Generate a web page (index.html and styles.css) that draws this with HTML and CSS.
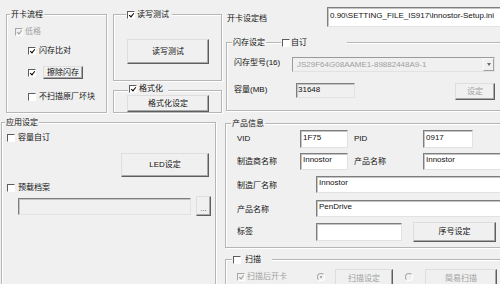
FILE: index.html
```html
<!DOCTYPE html>
<html>
<head>
<meta charset="utf-8">
<link rel="stylesheet" href="styles.css">
</head>
<body>
<div class="win">
  <div class="left">
    <div class="toprow">
      <div class="group g-flow">
        <div class="gtitle t-flow"><span class="tt">开卡流程</span></div>
        <div class="cbrow r-low dis"><span class="cb chk off"></span><span>低格</span></div>
        <div class="cbrow r-cmp"><span class="cb chk"></span><span>闪存比对</span></div>
        <div class="cbrow r-erase"><span class="cb chk"></span><button class="btn b-erase">擦除闪存</button></div>
        <div class="cbrow r-noscan"><span class="cb"></span><span>不扫描原厂坏块</span></div>
      </div>
      <div class="stack">
        <div class="group g-rw">
          <div class="gtitle t-rw"><span class="tt"><span class="cb chk"></span>读写测试</span></div>
          <button class="btn b-rw">读写测试</button>
        </div>
        <div class="group g-fmt">
          <div class="gtitle t-fmt"><span class="tt"><span class="cb chk"></span>格式化</span></div>
          <button class="btn b-fmt">格式化设定</button>
        </div>
      </div>
    </div>
    <div class="group g-app">
      <div class="gtitle t-app"><span class="tt">应用设定</span></div>
      <div class="cbrow r-cap"><span class="cb"></span><span>容量自订</span></div>
      <button class="btn b-led">LED设定</button>
      <div class="cbrow r-pre"><span class="cb"></span><span>预载档案</span></div>
      <div class="r-path"><div class="edit e-path off"></div><button class="btn b-dots">...</button></div>
    </div>
  </div>

  <div class="right">
    <div class="filerow">
      <span class="filelbl">开卡设定档</span>
      <div class="edit e-file">0.90\SETTING_FILE_IS917\Innostor-Setup.ini</div>
    </div>

    <div class="group g-nand">
      <div class="gtitle t-nand">
        <span class="tt">闪存设定</span>
        <span class="tt tt2"><span class="cb"></span>自订</span>
      </div>
      <div class="nrow n1">
        <span class="nl nl1">闪存型号(16)</span>
        <div class="combo"><span class="ctext">JS29F64G08AAME1-89882448A9-1</span><span class="dd"></span></div>
      </div>
      <div class="nrow n2">
        <span class="nl nl2">容量(MB)</span>
        <div class="edit e-cap off">31648</div>
        <button class="btn b-set dis">设定</button>
      </div>
    </div>

    <div class="group g-prod">
      <div class="gtitle t-prod"><span class="tt">产品信息</span></div>
      <div class="prow p1">
        <span class="pl pl-a">VID</span>
        <div class="edit e-s">1F75</div>
        <span class="pl pl-b">PID</span>
        <div class="edit e-s2">0917</div>
      </div>
      <div class="prow p2">
        <span class="pl pl-a">制造商名称</span>
        <div class="edit e-s">Innostor</div>
        <span class="pl pl-b">产品名称</span>
        <div class="edit e-m">Innostor</div>
      </div>
      <div class="prow p3">
        <span class="pl pl-c">制造厂名称</span>
        <div class="edit e-l">Innostor</div>
      </div>
      <div class="prow p4">
        <span class="pl pl-c">产品名称</span>
        <div class="edit e-l">PenDrive</div>
      </div>
      <div class="prow p5">
        <span class="pl pl-c">标签</span>
        <div class="edit e-tag"></div>
        <button class="btn b-sn">序号设定</button>
      </div>
    </div>

    <div class="group g-scan">
      <div class="gtitle t-scan"><span class="tt"><span class="cb"></span>扫描</span></div>
      <div class="srow dis">
        <span class="cb chk off"></span>
        <span class="s-txt">扫描后开卡</span>
        <span class="rd on r1"></span>
        <button class="btn dis b-scan">扫描设定</button>
        <span class="rd r2"></span>
        <button class="btn dis b-easy">简易扫描</button>
      </div>
    </div>
  </div>
</div>
</body>
</html>
```

FILE: styles.css
```css
body {
  margin: 0;
}

.win {
  width: 500px;
  height: 284px;
  overflow: hidden;
  display: flex;
  background: #f0f0f0;
  color: #111;
  font-family: "Liberation Sans", "Noto Sans CJK SC", sans-serif;
  font-size: 8px;
  line-height: 10px;
}

/* ---------- generic controls ---------- */
.group {
  box-sizing: border-box;
  border: 1px solid #b6b6b6;
  box-shadow: inset 1px 1px 0 #fff, 1px 1px 0 #fff;
  flex: none;
}

.gtitle {
  display: flex;
  width: max-content;
  height: 10px;
  margin-top: -5px;
}

.tt {
  display: flex;
  align-items: center;
  gap: 2px;
  padding: 0 1px;
  background: #f0f0f0;
  white-space: nowrap;
}

.cb {
  box-sizing: border-box;
  flex: none;
  width: 8px;
  height: 8px;
  display: inline-flex;
  align-items: center;
  justify-content: center;
  background: #fff;
  border: 1px solid;
  border-color: #5c5c5c #ffffff #ffffff #5c5c5c;
}

.cb.chk::after {
  content: "";
  width: 2px;
  height: 4px;
  margin-top: -1px;
  border: solid #000;
  border-width: 0 1.5px 1.5px 0;
  transform: rotate(40deg);
}

.cb.off {
  background: #f0f0f0;
  border-color: #a6a6a6 #ffffff #ffffff #a6a6a6;
}

.cb.off.chk::after {
  border-color: #a0a0a0;
}

.rd {
  box-sizing: border-box;
  flex: none;
  width: 8px;
  height: 8px;
  border-radius: 50%;
  display: inline-flex;
  align-items: center;
  justify-content: center;
  background: #f0f0f0;
  border: 1px solid;
  border-color: #a6a6a6 #ffffff #ffffff #a6a6a6;
}

.rd.on::after {
  content: "";
  width: 2px;
  height: 2px;
  border-radius: 50%;
  background: #9a9a9a;
}

.btn {
  box-sizing: border-box;
  display: block;
  flex: none;
  margin: 0;
  padding: 0;
  font: inherit;
  line-height: 10px;
  color: #111;
  background: #f0f0f0;
  border: 1px solid;
  border-color: #dedede #5e5e5e #5e5e5e #dedede;
  box-shadow: inset -1px -1px 0 #a8a8a8;
  white-space: nowrap;
}

.edit {
  box-sizing: border-box;
  flex: none;
  background: #fff;
  border: 1px solid;
  border-color: #7e7e7e #e2e2e2 #e2e2e2 #7e7e7e;
  box-shadow: inset 1px 1px 0 #c4c4c4;
  padding: 2px 0 0 2px;
  white-space: nowrap;
  overflow: hidden;
}

.edit.off {
  background: #f0f0f0;
}

.dis,
.dis .btn,
.btn.dis {
  color: #a0a0a0;
}

.cbrow {
  display: flex;
  align-items: center;
  gap: 3px;
  height: 10px;
}

/* ---------- left column ---------- */
.left {
  flex: none;
  width: 222px;
}

.toprow {
  display: flex;
  margin: 14px 0 0 6px;
}

.g-flow {
  width: 101px;
  height: 99px;
}

.t-flow {
  margin-left: 3px;
}

.r-low {
  margin: 7px 0 0 8px;
  gap: 2px;
}

.r-cmp {
  margin: 9px 0 0 21px;
}

.r-erase {
  margin: 10px 0 0 21px;
  height: 13px;
  gap: 7px;
}

.b-erase {
  width: 40px;
  height: 13px;
}

.r-noscan {
  margin: 13px 0 0 21px;
}

.stack {
  margin-left: 6px;
}

.g-rw {
  width: 109px;
  height: 67px;
}

.t-rw {
  margin-left: 12px;
}

.t-rw .tt {
  padding-right: 3px;
}

.b-rw {
  width: 82px;
  height: 25px;
  margin: 19px 0 0 13px;
}

.g-fmt {
  width: 109px;
  height: 23px;
  margin-top: 9px;
}

.t-fmt {
  margin: -7px 0 0 14px;
}

.t-fmt .tt {
  padding-right: 5px;
}

.b-fmt {
  width: 82px;
  height: 17px;
  margin: 1px 0 0 13px;
}

.g-app {
  width: 215px;
  height: 170px;
  margin: 9px 0 0 1px;
}

.t-app {
  margin-left: 3px;
}

.r-cap {
  margin: 5px 0 0 5px;
}

.b-led {
  width: 88px;
  height: 24px;
  margin: 10px 0 0 119px;
}

.r-pre {
  margin: 6px 0 0 5px;
}

.r-path {
  display: flex;
  align-items: center;
  height: 20px;
  margin: 3px 0 0 16px;
}

.e-path {
  width: 173px;
  height: 17px;
}

.b-dots {
  width: 15px;
  height: 20px;
  margin-left: 5px;
  padding-top: 6px;
  color: #555;
}

/* ---------- right column ---------- */
.right {
  flex: none;
  width: 278px;
}

.filerow {
  display: flex;
  margin-top: 7px;
}

.filelbl {
  flex: none;
  width: 100px;
  margin: 7px 0 0 5px;
}

.e-file {
  width: 180px;
  height: 20px;
  padding: 3px 0 0 2px;
}

.g-nand {
  width: 290px;
  height: 69px;
  margin: 15px 0 0 4px;
}

.t-nand {
  margin-left: 5px;
}

.tt2 {
  margin-left: 15px;
  gap: 1px;
  padding-right: 40px;
}

.nrow {
  display: flex;
  align-items: flex-start;
  margin-left: 7px;
}

.nl {
  flex: none;
}

.n1 {
  margin-top: 9px;
}

.nl1 {
  width: 58px;
  margin-top: 1px;
}

.combo {
  box-sizing: border-box;
  flex: none;
  display: flex;
  align-items: center;
  width: 203px;
  height: 15px;
  background: #f0f0f0;
  color: #a0a0a0;
  border: 1px solid;
  border-color: #9a9a9a #e2e2e2 #e2e2e2 #9a9a9a;
}

.ctext {
  padding-left: 4px;
  white-space: nowrap;
}

.dd {
  box-sizing: border-box;
  width: 11px;
  height: 13px;
  margin-left: auto;
  display: flex;
  align-items: center;
  justify-content: center;
  border: 1px solid;
  border-color: #f8f8f8 #a0a0a0 #a0a0a0 #f8f8f8;
}

.dd::after {
  content: "";
  border-left: 2.5px solid transparent;
  border-right: 2.5px solid transparent;
  border-top: 3px solid #6a6a6a;
}

.n2 {
  margin-top: 11px;
}

.nl2 {
  width: 62px;
  margin-top: 2px;
}

.e-cap {
  width: 59px;
  height: 15px;
  padding: 1px 0 0 1px;
}

.b-set {
  width: 40px;
  height: 17px;
  margin-left: 100px;
}

.g-prod {
  width: 290px;
  height: 125px;
  margin: 12px 0 0 3px;
}

.t-prod {
  margin-left: 5px;
}

.prow {
  display: flex;
  align-items: center;
  margin-left: 11px;
}

.pl {
  flex: none;
}

.pl-a {
  width: 63px;
}

.pl-b {
  width: 69px;
  margin-left: 6px;
}

.pl-c {
  width: 79px;
}

.p1 {
  height: 18px;
  margin-top: 1px;
}

.p1 .edit {
  height: 18px;
}

.p2 {
  height: 17px;
  margin-top: 5px;
}

.p2 .edit {
  height: 17px;
  padding-top: 1px;
}

.p3 {
  height: 17px;
  margin-top: 6px;
}

.p4 {
  height: 17px;
  margin-top: 7px;
}

.p3 .edit,
.p4 .edit {
  height: 17px;
  padding-top: 1px;
}

.p3 .pl,
.p4 .pl {
  margin-top: 3px;
}

.p5 {
  height: 20px;
  margin-top: 5px;
}

.e-s {
  width: 48px;
}

.e-s2 {
  width: 50px;
}

.e-m {
  width: 80px;
}

.e-l {
  width: 190px;
}

.e-tag {
  width: 86px;
  height: 18px;
}

.b-sn {
  width: 83px;
  height: 20px;
  margin-left: 11px;
}

.g-scan {
  width: 290px;
  height: 40px;
  margin: 11px 0 0 3px;
}

.t-scan {
  margin-left: 6px;
}

.t-scan .tt {
  gap: 4px;
  padding-right: 11px;
}

.srow {
  display: flex;
  align-items: center;
  height: 16px;
  margin: 4px 0 0 11px;
}

.s-txt {
  margin-left: 2px;
}

.r1 {
  margin-left: 30px;
}

.b-scan {
  align-self: flex-start;
  width: 58px;
  height: 20px;
  margin-left: 10px;
}

.r2 {
  margin-left: 12px;
}

.b-easy {
  align-self: flex-start;
  width: 72px;
  height: 20px;
  margin-left: 12px;
}
```
